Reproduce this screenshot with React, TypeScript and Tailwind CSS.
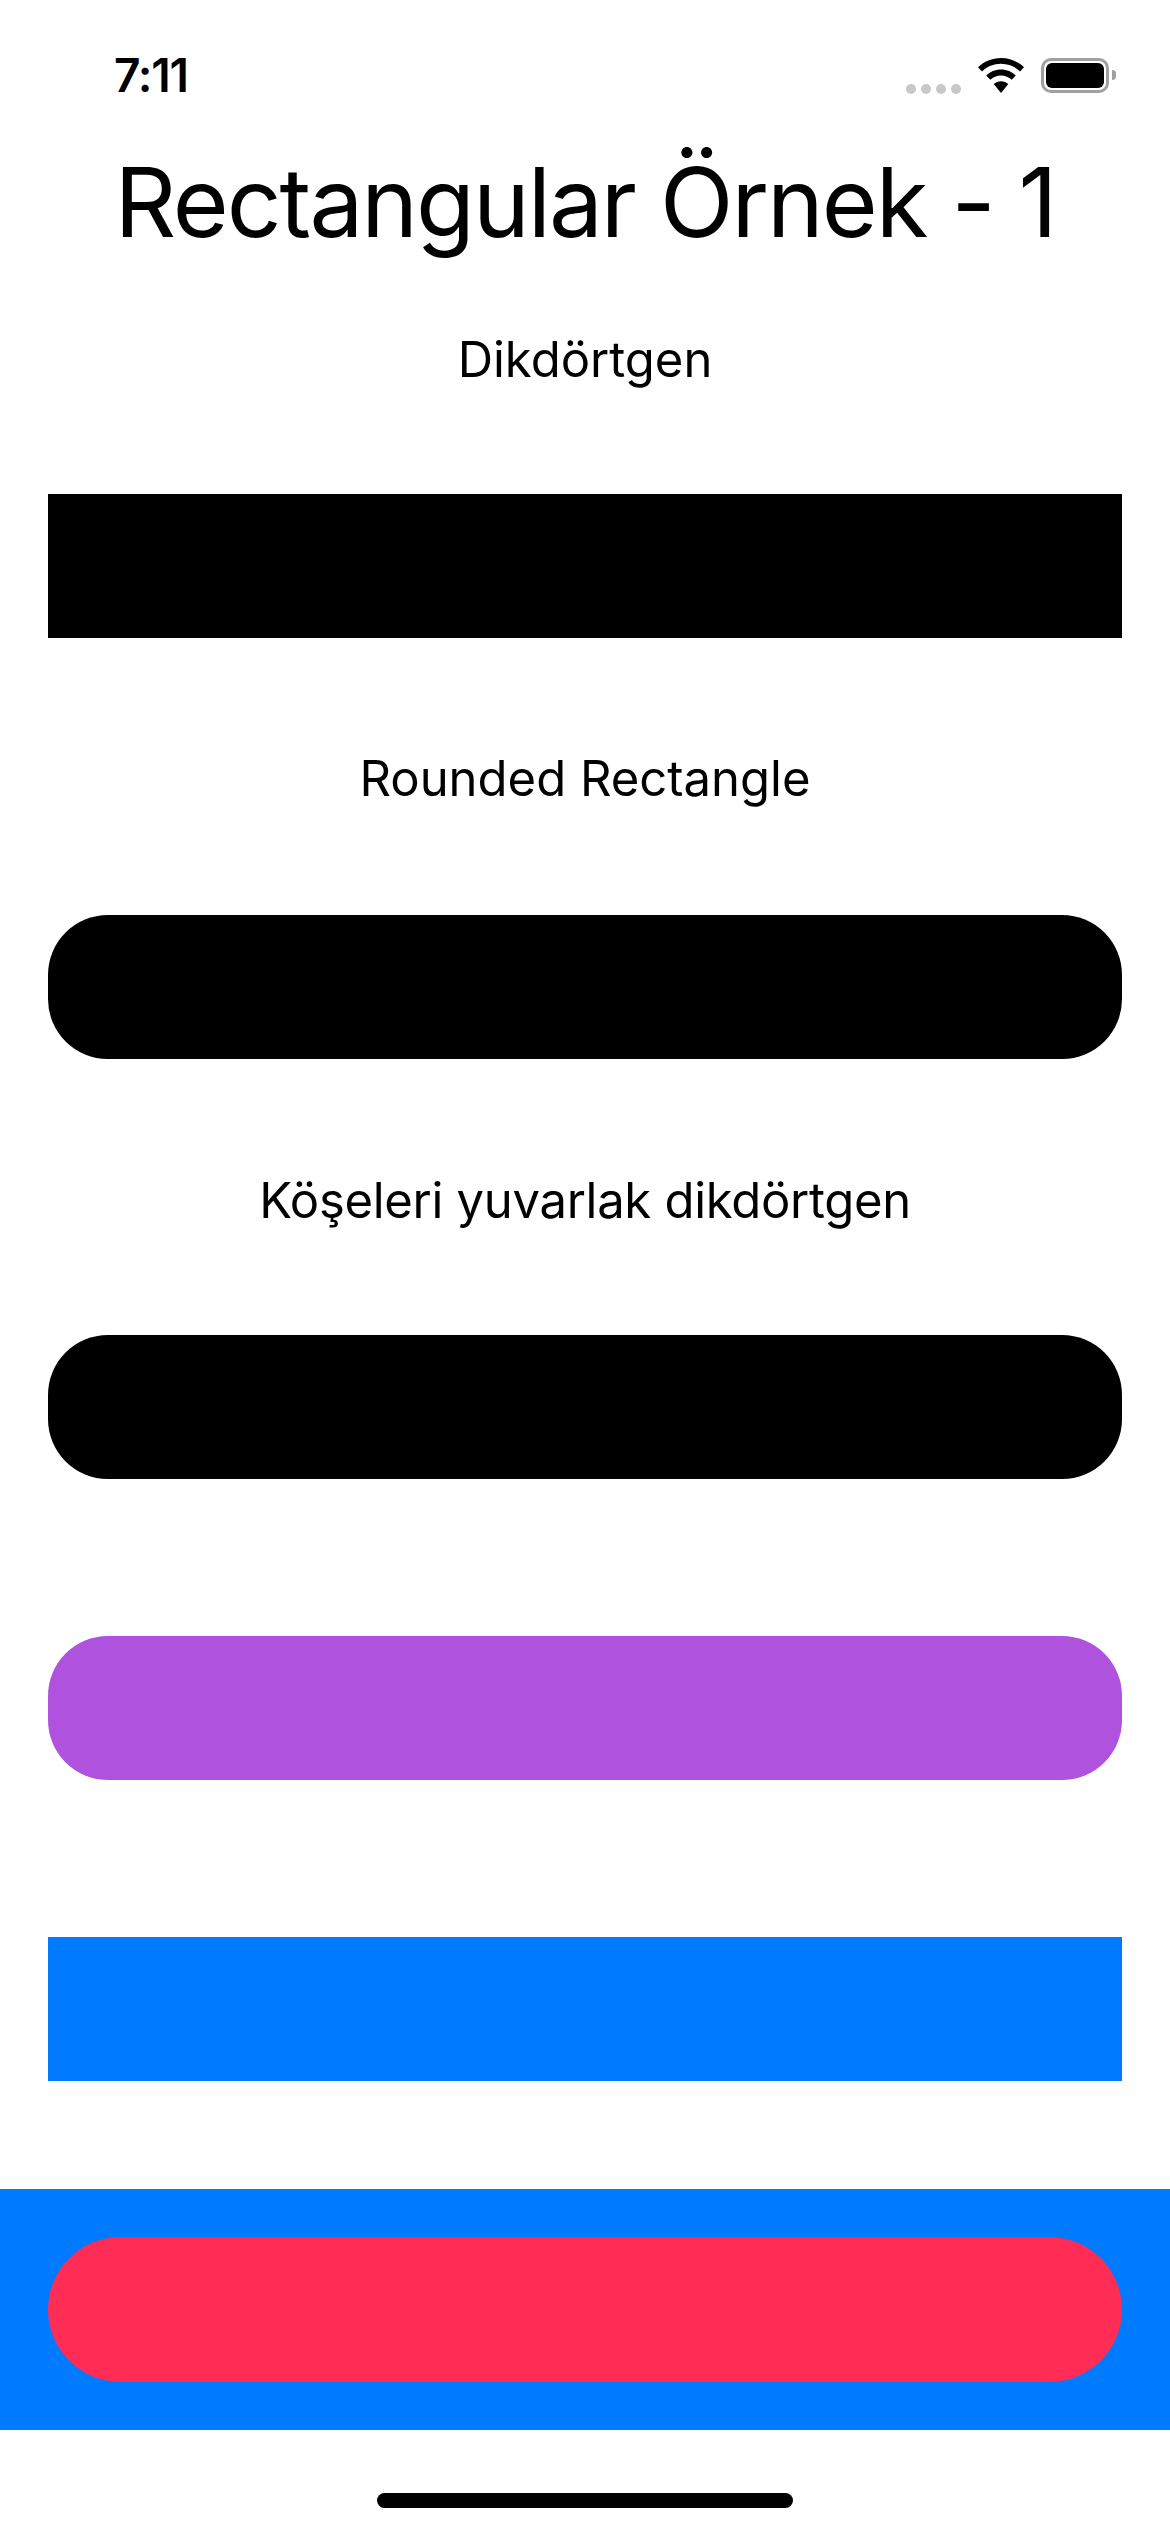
import React from 'react';

const font = { fontFamily: 'Inter, "Noto Sans", sans-serif' };

const WifiIcon = () => (
  <svg viewBox="0 0 48 35" className="w-[48px] h-[35px]" fill="#000">
    <path d="M24 0C15 0 7 3.5 1 9.2l4 4.2C10 8.6 16.7 5.8 24 5.8s14 2.8 19 7.6l4-4.2C41 3.5 33 0 24 0z" />
    <path d="M24 11.6c-5.8 0-11 2.3-14.8 6l4.1 4.2c2.8-2.6 6.5-4.3 10.7-4.3s7.9 1.7 10.7 4.3l4.1-4.2c-3.8-3.7-9-6-14.8-6z" />
    <path d="M24 23.2c-2.8 0-5.4 1.1-7.3 2.9L24 35l7.3-8.9c-1.9-1.8-4.5-2.9-7.3-2.9z" />
  </svg>
);

const Battery = () => (
  <div className="flex items-center">
    <div className="w-[68px] h-[35px] rounded-[10px] border-[3px] border-[#a0a0a0] p-[2px]">
      <div className="w-full h-full rounded-[6px] bg-black" />
    </div>
    <div className="ml-[3px] w-[4px] h-[10px] rounded-r-full bg-[#a0a0a0]" />
  </div>
);

function StatusBar() {
  return (
    <div className="flex items-center justify-between pt-[52px] pl-[114px] pr-[54px]">
      <span className="text-[46px] font-semibold leading-none tracking-tight text-black">7:11</span>
      <div className="flex items-center gap-[16px]">
        <div className="flex gap-[5px] mt-[28px]">
          <span className="w-[10px] h-[10px] rounded-full bg-[#c7c7cc]" />
          <span className="w-[10px] h-[10px] rounded-full bg-[#c7c7cc]" />
          <span className="w-[10px] h-[10px] rounded-full bg-[#c7c7cc]" />
          <span className="w-[10px] h-[10px] rounded-full bg-[#c7c7cc]" />
        </div>
        <WifiIcon />
        <Battery />
      </div>
    </div>
  );
}

export default function App() {
  return (
    <div className="w-[1170px] h-[2532px] bg-white flex flex-col overflow-hidden" style={font}>
      <StatusBar />

      {/* Title */}
      <h1 className="mt-[56px] text-center text-[96px] leading-none font-normal tracking-[-2px] text-black">
        Rectangular Örnek - 1
      </h1>

      <p className="mt-[85px] text-center text-[49px] leading-none text-black">Dikdörtgen</p>
      <div className="mt-[110px] mx-[48px] h-[144px] bg-black" />

      <p className="mt-[116px] text-center text-[49px] leading-none text-black">Rounded Rectangle</p>
      <div className="mt-[112px] mx-[48px] h-[144px] rounded-[60px] bg-black" />

      <p className="mt-[117px] text-center text-[49px] leading-none tracking-[-0.3px] text-black">Köşeleri yuvarlak dikdörtgen</p>
      <div className="mt-[110px] mx-[48px] h-[144px] rounded-[60px] bg-black" />

      <div className="mt-[157px] mx-[48px] h-[144px] rounded-[60px] bg-[#af52de]" />

      <div className="mt-[157px] mx-[48px] h-[144px] bg-[#007aff]" />

      <div className="mt-[108px] bg-[#007aff] p-[48px]">
        <div className="h-[145px] rounded-full bg-[#ff2d55]" />
      </div>

      {/* Home indicator */}
      <div className="mt-[63px] mx-auto w-[416px] h-[15px] rounded-full bg-black" />
    </div>
  );
}
